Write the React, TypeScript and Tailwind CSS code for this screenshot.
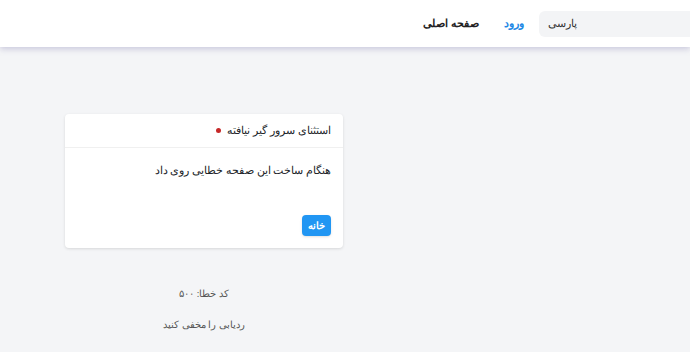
import React from 'react';

const App: React.FC = () => {
  return (
    <div dir="rtl" className="h-[352px] w-[690px] overflow-hidden bg-[#f4f5f7] font-['Noto_Sans',sans-serif] text-[#212529]">
      {/* Top bar */}
      <header className="relative z-10 flex h-[47px] items-center bg-white shadow-[0_2px_6px_rgba(120,115,170,0.35)]">
        <div className="flex h-[26px] w-[151px] items-center rounded-l-md bg-[#f3f4f6] pl-[9px] text-[11px] text-[#333]" dir="ltr">
          <span dir="rtl">پارسی</span>
        </div>
        <a className="mr-[15px] text-[10.5px] font-bold text-[#1e88e5]">ورود</a>
        <a className="mr-[25px] text-[10.5px] font-bold text-[#222]">صفحه اصلی</a>
      </header>

      {/* Error card */}
      <div dir="ltr" className="pl-[65px] pt-[67px]">
        <div className="w-[278px]">
          <div dir="rtl" className="rounded-[4px] bg-white shadow-[0_1px_3px_rgba(0,0,0,0.12)]">
            <div className="flex h-[34px] items-center gap-[6px] border-b border-[#f0f0f0] px-3 text-[11px]">
              <span>استثنای سرور گیر نیافته</span>
              <span className="h-[5px] w-[5px] rounded-full bg-[#c62828]" />
            </div>
            <div className="px-3 pb-3 pt-[13px]">
              <p className="text-[10.5px] leading-[18px]">هنگام ساخت این صفحه خطایی روی داد</p>
              <button className="mt-[36px] h-[21px] w-[29px] rounded-[4px] bg-[#2196f3] text-[10px] font-bold text-white shadow-sm">
                خانه
              </button>
            </div>
          </div>
          <div dir="rtl" className="mt-[39px] flex flex-col items-center gap-[17px] text-[9.5px] text-[#555]">
            <span>کد خطا: ۵۰۰</span>
            <span>ردیابی را مخفی کنید</span>
          </div>
        </div>
      </div>
    </div>
  );
};

export default App;
